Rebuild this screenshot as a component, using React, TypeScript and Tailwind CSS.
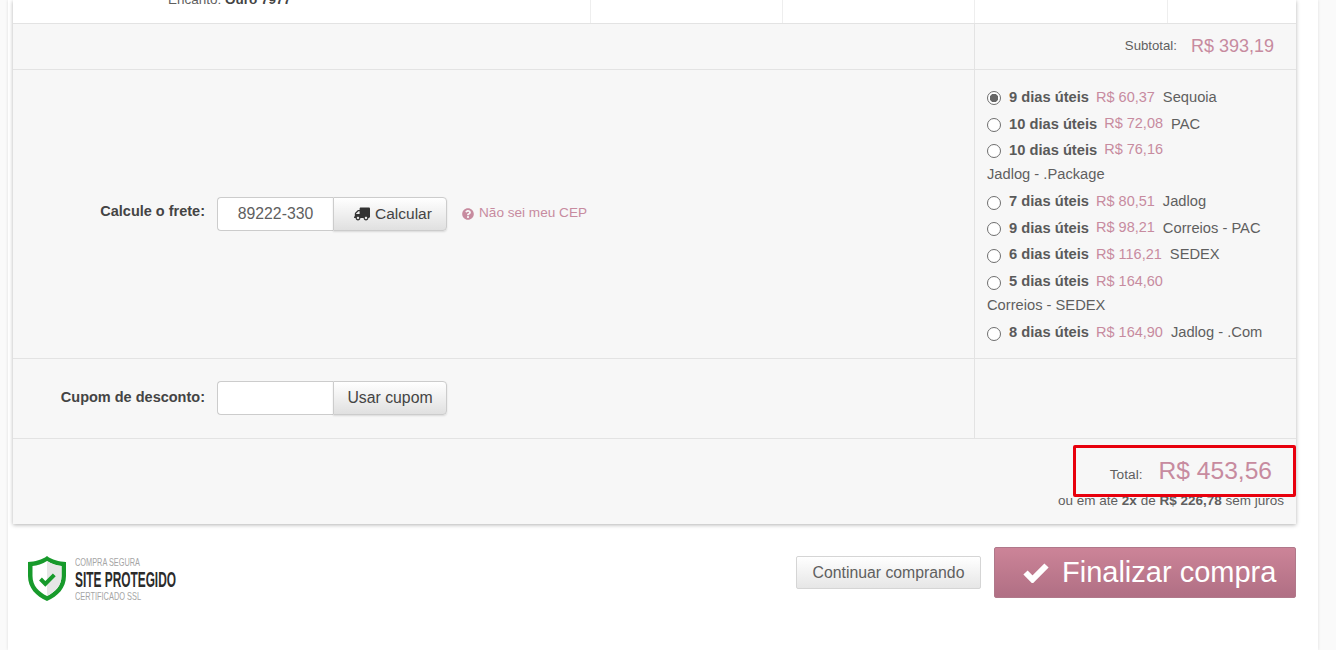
import { FaQuestionCircle, FaTruck } from "react-icons/fa";

const options = [
  { d: "9 dias úteis", p: "R$ 60,37", n: "Sequoia", checked: true, h: "h-[27px]" },
  { d: "10 dias úteis", p: "R$ 72,08", n: "PAC", h: "h-[26px]" },
  { d: "10 dias úteis", p: "R$ 76,16", below: "Jadlog - .Package", h: "h-[26px]", bh: "h-[25px] leading-[22px]" },
  { d: "7 dias úteis", p: "R$ 80,51", n: "Jadlog", h: "h-[27px]" },
  { d: "9 dias úteis", p: "R$ 98,21", n: "Correios - PAC", h: "h-[26px]" },
  { d: "6 dias úteis", p: "R$ 116,21", n: "SEDEX", h: "h-[27px]" },
  { d: "5 dias úteis", p: "R$ 164,60", below: "Correios - SEDEX", h: "h-[27px]", bh: "h-[24px] leading-[20px]" },
  { d: "8 dias úteis", p: "R$ 164,90", n: "Jadlog - .Com", h: "h-[27px]" },
];

function Option({ o }: { o: (typeof options)[number] }) {
  return (
    <>
      <div className={`flex items-center ${o.h}`}>
        <input
          type="radio"
          readOnly
          checked={!!o.checked}
          className={`appearance-none w-[14px] h-[14px] rounded-full border border-[#6e6e6e] bg-white mr-[8px] ${o.checked ? "bg-[radial-gradient(circle,#666_0,#666_4px,#fff_4.5px)]" : "translate-y-[1px]"}`}
        />
        <b className="font-bold text-[#5a5a5a] mr-[7px]">{o.d}</b>
        <span className="text-[14.5px] text-[#c78b9f] mr-2">{o.p}</span>
        {o.n && <span>{o.n}</span>}
      </div>
      {o.below && <div className={o.bh}>{o.below}</div>}
    </>
  );
}

function Logo() {
  return (
    <div className="flex items-start gap-[9px] mt-[9px] self-start">
      <svg width="38" height="45" viewBox="0 0 38 45" aria-hidden="true">
        <path d="M19 0C24 4 31 5.500 38 6V20C38 32 30 40 19 45C8 40 0 32 0 20V6C7 5.500 14 4 19 0z" fill="#179A2B" />
        <path d="M19 5C23.500 8 29 9.500 33.500 10V20C33.500 30 27 36 19 40C11 36 4.500 30 4.500 20V10C9 9.500 14.500 8 19 5z" fill="#ffffff" />
        <path d="M19 5C23.500 8 29 9.500 33.500 10V20C33.500 30 27 36 19 40z" fill="#e6e6e6" />
        <path d="M12.500 23l4.800 4.800 9-9" fill="none" stroke="#179A2B" strokeWidth="4" />
      </svg>
      <svg width="170" height="46" viewBox="0 0 170 46" aria-label="Compra segura. Site protegido. Certificado SSL">
        <text x="0" y="9.500" fontFamily="'Liberation Sans', sans-serif" fontSize="11" fill="#a5a5a5" textLength="65" lengthAdjust="spacingAndGlyphs">COMPRA SEGURA</text>
        <text x="0" y="30.500" fontFamily="'Liberation Sans', sans-serif" fontSize="22" fontWeight="bold" fill="#2b2b2b" textLength="101" lengthAdjust="spacingAndGlyphs">SITE PROTEGIDO</text>
        <text x="0" y="44" fontFamily="'Liberation Sans', sans-serif" fontSize="11" fill="#a5a5a5" textLength="66" lengthAdjust="spacingAndGlyphs">CERTIFICADO SSL</text>
      </svg>
    </div>
  );
}

const btn =
  "h-[34px] border border-[#ccc] rounded-r-[4px] bg-gradient-to-b from-white to-[#e0e0e0] text-[#444] shadow-[0_1px_2px_rgba(0,0,0,.12)] flex items-center";

export default function App() {
  return (
    <div className="h-[650px] overflow-hidden bg-[#fafafa] font-['Liberation_Sans',Arial,sans-serif] text-[14.700px] text-[#5f5f5f]">
      <div className="ml-[8px] w-[1310px] h-full bg-white pl-[5px] pr-[22px] shadow-[0_0_3px_rgba(0,0,0,.12)]">
        <div className="bg-[#f7f7f7] shadow-[0_1px_4px_rgba(0,0,0,.3)]">
          <div className="h-[24px] bg-white border-b border-[#e3e3e3] flex overflow-hidden">
            <div className="w-[577px] pl-[155px] flex items-end pb-[15px] leading-[16px] text-[13.500px] whitespace-nowrap">
              <span>Encanto: <b className="text-[#444]">Ouro 7977</b></span>
            </div>
            <div className="w-[192px] border-l border-[#eee]" />
            <div className="w-[192px] border-l border-[#eee]" />
            <div className="w-[193px] border-l border-[#eee]" />
            <div className="flex-1 border-l border-[#eee]" />
          </div>

          <div className="h-[46px] flex border-b border-[#e3e3e3]">
            <div className="w-[961px]" />
            <div className="flex-1 border-l border-[#e3e3e3] flex items-center justify-end pr-[22px] pb-[1px]">
              <span className="text-[13.200px] mr-[14px]">Subtotal:</span>
              <span className="text-[18px] text-[#c78b9f]">R$ 393,19</span>
            </div>
          </div>

          <div className="h-[289px] flex border-b border-[#e3e3e3]">
            <div className="w-[961px] flex items-center">
              <span className="w-[192px] pb-[4px] text-right font-bold text-[14.500px] text-[#444] mr-[12px]">Calcule o frete:</span>
              <div className="w-[116px] h-[34px] bg-white border border-[#ccc] border-r-0 rounded-l-[4px] flex items-center justify-center text-[15.800px]">89222-330</div>
              <div className={`${btn} w-[114px] gap-[5px] pl-[20px] text-[15.500px]`}>
                <FaTruck className="text-[#333] -scale-x-100 w-[16px] h-[14px]" />
                Calcular
              </div>
              <FaQuestionCircle className="ml-[15px] text-[#c78b9f] w-[12px] h-[12px]" />
              <span className="ml-[5px] pb-[2px] text-[13.600px] text-[#c78b9f]">Não sei meu CEP</span>
            </div>
            <div className="flex-1 border-l border-[#e3e3e3] pl-[12px] pt-[14px]">
              {options.map((o) => (
                <Option key={o.p} o={o} />
              ))}
            </div>
          </div>

          <div className="h-[80px] flex border-b border-[#e3e3e3]">
            <div className="w-[961px] flex items-center pb-[2px]">
              <span className="w-[192px] text-right font-bold text-[14.500px] text-[#444] mr-[12px]">Cupom de desconto:</span>
              <div className="w-[116px] h-[34px] bg-white border border-[#ccc] border-r-0 rounded-l-[4px]" />
              <div className={`${btn} w-[114px] justify-center text-[15.800px]`}>Usar cupom</div>
            </div>
            <div className="flex-1 border-l border-[#e3e3e3]" />
          </div>

          <div className="h-[85px] relative flex flex-col items-end pr-[12px]">
            <div className="pr-[12px] pt-[14px] flex items-baseline h-[54px]">
              <span className="text-[13.700px] mr-[16px]">Total:</span>
              <span className="text-[24.600px] text-[#c78b9f]">R$ 453,56</span>
            </div>
            <div className="text-[13.500px] leading-[16px] whitespace-nowrap">
              ou em até <b>2x</b> de <b>R$ 226,78</b> sem juros
            </div>
            <div className="absolute left-[1060px] top-[6px] w-[223px] h-[52px] border-[3px] border-[#e8000d] rounded-[2px] pointer-events-none" />
          </div>
        </div>

        <div className="flex items-start pl-[15px] mt-[23px]">
          <Logo />
          <div className="ml-auto flex items-start">
            <div className="w-[185px] h-[33px] border border-[#d5d5d5] rounded-[2px] bg-gradient-to-b from-white to-[#e6e6e6] text-[15.800px] flex items-center justify-center mr-[13px] mt-[9px]">
              Continuar comprando
            </div>
            <div className="w-[302px] h-[51px] rounded-[2px] border border-[#b0788a] bg-gradient-to-b from-[#cc8498] to-[#b06f84] text-white text-[29px] flex items-center pl-[28px]">
              <svg width="26" height="21" viewBox="0 0 26 21" className="mr-[13px]" aria-hidden="true">
                <path d="M2.500 10.500L9.500 17.500L23.500 3.500" fill="none" stroke="#fff" strokeWidth="6" />
              </svg>
              Finalizar compra
            </div>
          </div>
        </div>
      </div>
    </div>
  );
}
